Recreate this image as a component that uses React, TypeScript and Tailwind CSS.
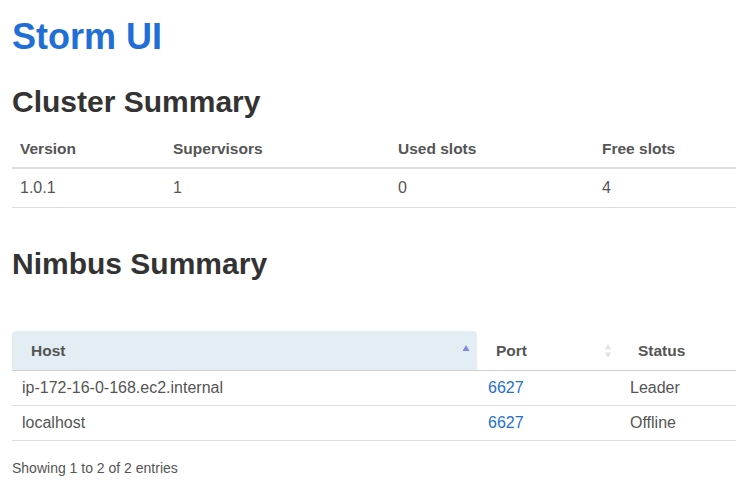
import React from "react";

const font = { fontFamily: '"Liberation Sans", Arial, sans-serif' };

function SortAsc() {
  return (
    <svg width="8" height="12" viewBox="0 0 8 12" className="absolute right-[7px] top-[12px]">
      <polygon points="4,2 7.5,8 0.5,8" fill="#7f88d9" />
    </svg>
  );
}
function SortBoth() {
  return (
    <svg width="8" height="16" viewBox="0 0 8 16" className="absolute right-[8px] top-[12px]">
      <polygon points="4,1 7,6.5 1,6.5" fill="#e0e0e0" />
      <polygon points="4,15 7,9.5 1,9.5" fill="#e0e0e0" />
    </svg>
  );
}

export default function App() {
  return (
    <div className="bg-white w-[736px] h-[491px] overflow-hidden pl-[12px]" style={font}>
      <h1 className="pt-[17px] text-[36px] leading-[40px] font-bold text-[#1f6fd6]">Storm UI</h1>
      <h2 className="mt-[28px] text-[30px] leading-[33px] font-bold text-[#333]">Cluster Summary</h2>
      <table className="mt-[12px] w-[740px] table-fixed border-collapse text-[16px] text-[#555]">
        <colgroup>
          <col className="w-[153px]" />
          <col className="w-[225px]" />
          <col className="w-[204px]" />
          <col />
        </colgroup>
        <thead>
          <tr className="border-b-2 border-[#ddd] text-[15.5px]">
            <th className="text-left font-bold px-[8px] h-[38px]">Version</th>
            <th className="text-left font-bold px-[8px]">Supervisors</th>
            <th className="text-left font-bold px-[8px]">Used slots</th>
            <th className="text-left font-bold px-[8px]">Free slots</th>
          </tr>
        </thead>
        <tbody>
          <tr className="border-b border-[#ddd]">
            <td className="px-[8px] h-[39px]">1.0.1</td>
            <td className="px-[8px]">1</td>
            <td className="px-[8px]">0</td>
            <td className="px-[8px]">4</td>
          </tr>
        </tbody>
      </table>
      <h2 className="mt-[39px] text-[30px] leading-[33px] font-bold text-[#333]">Nimbus Summary</h2>
      <table className="mt-[51px] w-[740px] table-fixed border-collapse text-[16px] text-[#555]">
        <colgroup>
          <col className="w-[465px]" />
          <col className="w-[143px]" />
          <col />
        </colgroup>
        <thead>
          <tr className="border-b border-[#cfcfcf] text-[15.5px]">
            <th className="relative text-left font-bold pl-[19px] h-[40px] bg-[#e3eef4] rounded-tl-[4px] rounded-tr-[4px]">
              Host
              <SortAsc />
            </th>
            <th className="relative text-left font-bold pl-[19px]">
              Port
              <SortBoth />
            </th>
            <th className="text-left font-bold pl-[18px]">Status</th>
          </tr>
        </thead>
        <tbody>
          <tr className="border-b border-[#ddd]">
            <td className="pl-[10px] h-[35px]">ip-172-16-0-168.ec2.internal</td>
            <td className="pl-[11px] text-[#1f6fd6]">6627</td>
            <td className="pl-[10px]">Leader</td>
          </tr>
          <tr className="border-b border-[#ddd]">
            <td className="pl-[10px] h-[35px]">localhost</td>
            <td className="pl-[11px] text-[#1f6fd6]">6627</td>
            <td className="pl-[10px]">Offline</td>
          </tr>
        </tbody>
      </table>
      <div className="mt-[17px] text-[14px] leading-[20px] text-[#555]">Showing 1 to 2 of 2 entries</div>
    </div>
  );
}
